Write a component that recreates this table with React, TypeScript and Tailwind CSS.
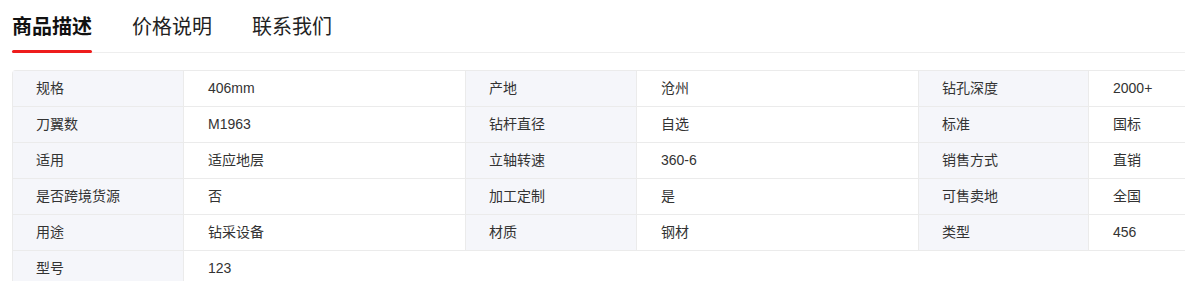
import React from 'react';

const tabs = ['商品描述', '价格说明', '联系我们'];

// label/value pairs, three pairs per row
const specs: [string, string][] = [
  ['规格', '406mm'],
  ['产地', '沧州'],
  ['钻孔深度', '2000+'],
  ['刀翼数', 'M1963'],
  ['钻杆直径', '自选'],
  ['标准', '国标'],
  ['适用', '适应地层'],
  ['立轴转速', '360-6'],
  ['销售方式', '直销'],
  ['是否跨境货源', '否'],
  ['加工定制', '是'],
  ['可售卖地', '全国'],
  ['用途', '钻采设备'],
  ['材质', '钢材'],
  ['类型', '456'],
  ['型号', '123'],
];

function App() {
  return (
    <div
      className="w-full overflow-hidden bg-white pl-3"
      style={{ fontFamily: '"Liberation Sans", "Noto Sans CJK SC", sans-serif' }}
    >
      {/* Tabs */}
      <div className="flex gap-10 border-b border-[#eeeeee] pt-[13px]">
        {tabs.map((t, i) => (
          <div key={t} className="relative pb-[11px]">
            <span
              className={`block text-[20px] leading-7 ${
                i === 0 ? 'font-bold text-[#111111]' : 'text-[#222222]'
              }`}
            >
              {t}
            </span>
            {i === 0 && (
              <span className="absolute bottom-[-1px] left-0 h-[3px] w-full rounded-full bg-[#ee1c1c]" />
            )}
          </div>
        ))}
      </div>

      {/* Spec table */}
      <div className="mt-[17px] grid w-max grid-cols-[171px_282px_171px_282px_170px_282px] rounded-tl border-l border-t border-[#ebebeb]">
        {specs.map(([k, v], i) => (
          <React.Fragment key={k}>
            <div className="flex h-9 items-center border-b border-r border-[#ebebeb] bg-[#f5f6fa] pl-[23px] text-[14px] text-[#333333]">
              {k}
            </div>
            <div
              className={`flex h-9 items-center border-b border-[#ebebeb] bg-white pl-6 text-[14px] text-[#333333] ${
                i === specs.length - 1 ? '' : 'border-r'
              }`}
            >
              {v}
            </div>
          </React.Fragment>
        ))}
      </div>
    </div>
  );
}

export default App;
